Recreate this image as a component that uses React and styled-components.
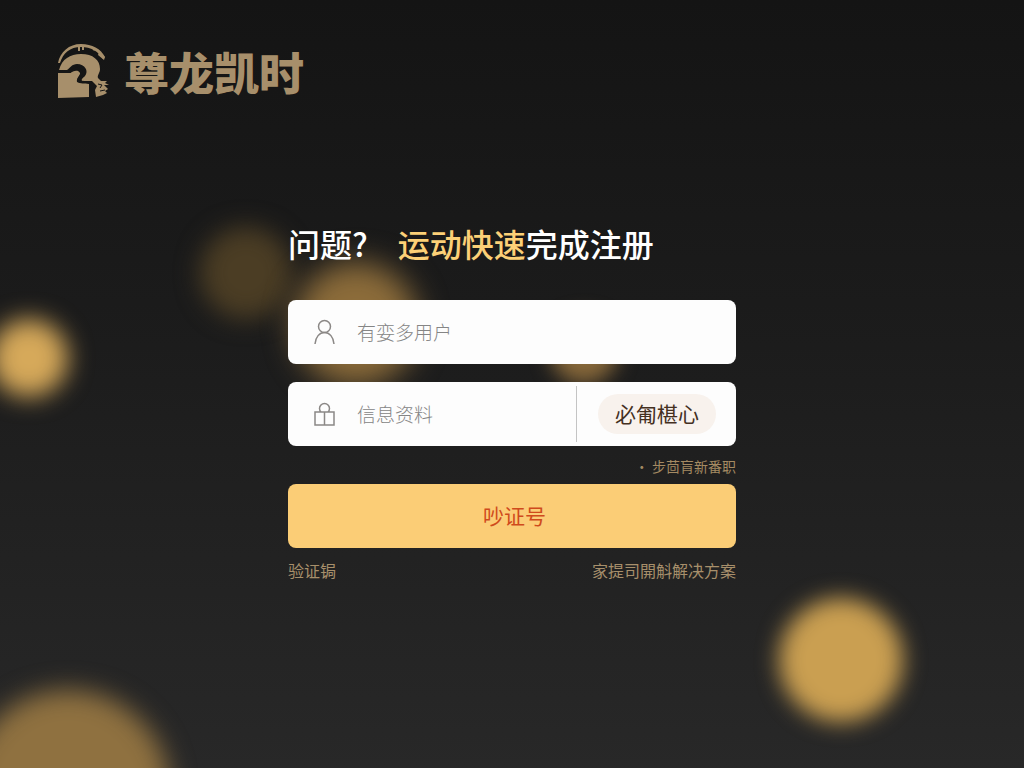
import React from 'react';
import styled, { createGlobalStyle } from 'styled-components';

const GlobalStyle = createGlobalStyle`
  * {
    box-sizing: border-box;
  }

  body {
    background: #262626;
    font-family: 'Noto Sans CJK SC', sans-serif;
    margin: 0;
  }
`;

const Page = styled.div`
  background: linear-gradient(#141414, #1c1c1c 45%, #282828);
  isolation: isolate;
  min-height: 100vh;
  overflow: hidden;
  position: relative;
`;

// blurred lights floating behind the form
const Light = styled.span`
  background: ${({ color }) => color};
  border-radius: 50%;
  filter: blur(${({ $blur }) => $blur}px);
  height: ${({ $size }) => $size}px;
  left: ${({ $x }) => $x};
  position: absolute;
  top: ${({ $y }) => $y};
  transform: translate(-50%, -50%);
  width: ${({ $size }) => $size}px;
  z-index: -1;
`;

const Header = styled.header`
  align-items: center;
  color: #a78f6b;
  display: flex;
  gap: 14px;
  height: 144px;
  padding-left: 56px;
`;

const BrandName = styled.span`
  font-size: 45px;
  font-weight: 900;
  line-height: 48px;
`;

const Form = styled.form`
  margin: 0 auto;
  max-width: 480px;
  padding: 75px 16px 32px;
`;

const Title = styled.h1`
  color: #fff;
  display: flex;
  font-size: 32px;
  font-weight: 500;
  gap: 30px;
  line-height: 48px;
  margin: 0 0 33px;
  white-space: nowrap;
`;

const Highlight = styled.span`
  color: #fcd077;
`;

const Field = styled.div`
  align-items: center;
  background: #fdfdfd;
  border-radius: 8px;
  display: flex;
  height: 64px;
  margin-bottom: ${({ $last }) => ($last ? 8 : 18)}px;
  padding: 0 20px 0 24px;
`;

const FieldLabel = styled.label`
  color: #8b8886;
  display: flex;
  margin-right: 20px;
`;

const Input = styled.input`
  background: none;
  border: 0;
  color: #333;
  flex: 1;
  font-family: inherit;
  font-size: 19px;
  font-weight: 300;
  line-height: 28px;
  min-width: 0;
  outline: none;
  padding: 0;

  &::placeholder {
    color: #858585;
    opacity: 1;
  }
`;

const CodeAction = styled.div`
  align-items: center;
  border-left: 1px solid #c4c4c4;
  display: flex;
  height: 56px;
  padding-left: 21px;
`;

const CodeButton = styled.button`
  background: #f8f2ed;
  border: 0;
  border-radius: 20px;
  color: #44301f;
  font-family: inherit;
  font-size: 21px;
  height: 40px;
  line-height: 36px;
  padding: 0 17px 2px;
`;

const Hint = styled.p`
  color: #a48a62;
  font-size: 14px;
  line-height: 24px;
  margin: 0 0 6px;
  text-align: right;
`;

const SubmitButton = styled.button`
  background: #fbcd76;
  border: 0;
  border-radius: 8px;
  color: #cf4a1c;
  display: block;
  font-family: inherit;
  font-size: 21px;
  height: 64px;
  line-height: 32px;
  padding: 0 0 2px 5px;
  width: 100%;
`;

const Links = styled.nav`
  display: flex;
  justify-content: space-between;
  margin-top: 10px;
`;

const FootLink = styled.a`
  color: #a78f6b;
  font-size: 16px;
  line-height: 24px;
  text-decoration: none;
`;

const LogoIcon = () => (
  <svg aria-hidden="true" fill="currentColor" height="56" viewBox="0 0 54 56" width="54">
    <path d="M2 19C4 8 13 0 25 0C36 0 45 5 49 13L47 15C42 7 35 3 25 3C14 3 7 9 4 19Z" />
    <path d="M22 2h2v5h-2zM26 2h2v4h-2zM35 3l5 2-2 2zM43 8l6 5-1 3-6-5z" />
    <path d="M3 26C6 15 14 10 25 10C37 10 44 16 44 25C44 29 41 31 42 34L45 37H51L49 39L53 41H48L52 45L49 47L51 49L47 51L40 53L39 46L41 42L38 39L36 37H26C25 35 27 34 29 32C33 27 29 20 21 20C16 20 14 24 11 26Z" />
    <path d="M2 29H14C17 27 22 25 24 29C25 32 20 34 21 38C24 40 29 39 33 40V53L2 54Z" />
    <path
      d="M2 28H14C17 25 22 23 25 27C28 31 21 32 22 37C26 39 32 37 36 39V54"
      fill="none"
      stroke="#161616"
      strokeWidth="2"
    />
    <path d="M42 40l4 1-2 3M44 47l5-1" fill="none" stroke="#161616" />
  </svg>
);

const UserIcon = () => (
  <svg aria-hidden="true" fill="none" height="28" stroke="currentColor" strokeWidth="1.500" viewBox="0 0 25 28" width="25">
    <circle cx="12.500" cy="8.500" r="6" />
    <path d="M3 26C3.500 19 7.500 14.500 12.500 14.500S21.500 19 22 26" />
  </svg>
);

const CodeIcon = () => (
  <svg aria-hidden="true" fill="none" height="28" stroke="currentColor" strokeWidth="1.500" viewBox="0 0 25 28" width="25">
    <path d="M9 12A5 5 0 1 1 16 12M3 12H22V25H3ZM12.500 12V25" />
  </svg>
);

export default function App() {
  return (
    <Page>
      <GlobalStyle />
      <Light color="#4b3d24" $blur={12} $size={92} $x="24%" $y="273px" />
      <Light color="#8c6c3a" $blur={15} $size={124} $x="34.800%" $y="324px" />
      <Light color="#87683a" $blur={10} $size={68} $x="57%" $y="350px" />
      <Light color="#d6a95a" $blur={12} $size={78} $x="2.800%" $y="358px" />
      <Light color="#ca9f51" $blur={11} $size={124} $x="82.100%" $y="660px" />
      <Light color="#8f7140" $blur={13} $size={204} $x="6.600%" $y="792px" />

      <Header>
        <LogoIcon />
        <BrandName>尊龙凯时</BrandName>
      </Header>

      <Form onSubmit={e => e.preventDefault()}>
        <Title>
          <span>问题?</span>
          <span>
            <Highlight>运动快速</Highlight>完成注册
          </span>
        </Title>
        <Field>
          <FieldLabel htmlFor="user">
            <UserIcon />
          </FieldLabel>
          <Input id="user" placeholder="有娈多用户" type="text" />
        </Field>
        <Field $last>
          <FieldLabel htmlFor="code">
            <CodeIcon />
          </FieldLabel>
          <Input id="code" placeholder="信息资料" type="text" />
          <CodeAction>
            <CodeButton type="button">必匍椹心</CodeButton>
          </CodeAction>
        </Field>
        <Hint>• 步茴肓新番职</Hint>
        <SubmitButton type="submit">吵证号</SubmitButton>
        <Links>
          <FootLink href="#verify">验证锔</FootLink>
          <FootLink href="#help">家提司開斛解决方案</FootLink>
        </Links>
      </Form>
    </Page>
  );
}
